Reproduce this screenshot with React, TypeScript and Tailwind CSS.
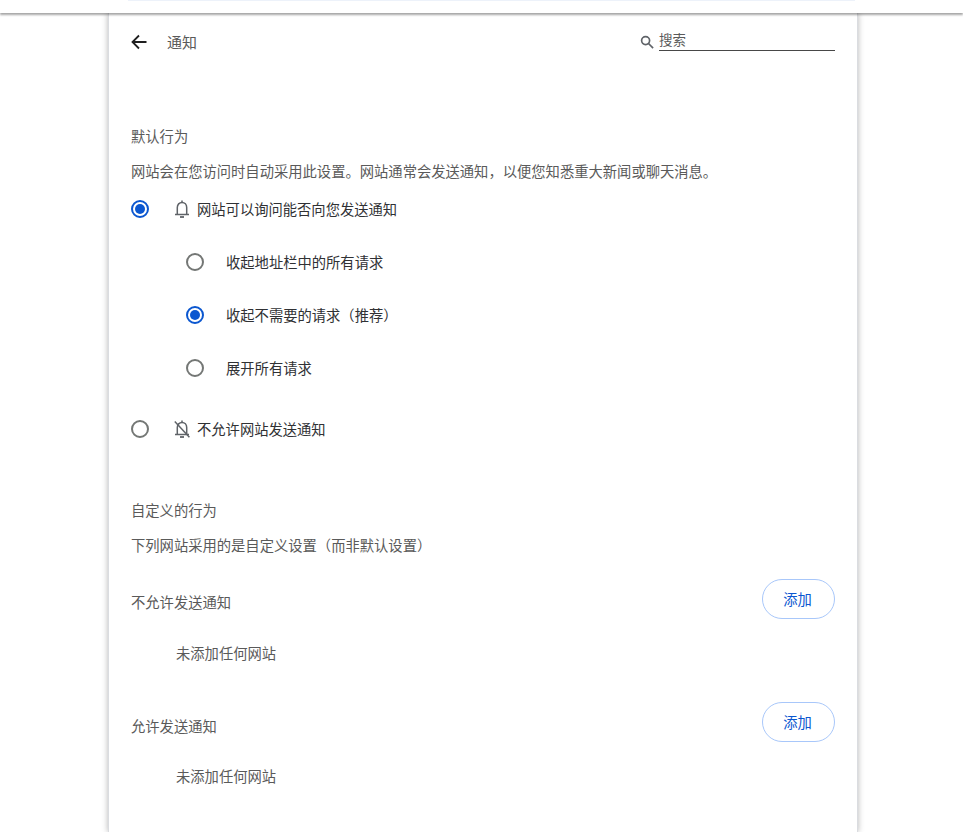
const font = { fontFamily: '"Noto Sans CJK SC", "Noto Sans", sans-serif' };

const Radio = ({ checked }: { checked?: boolean }) => (
  <span
    className={`flex h-[18px] w-[18px] shrink-0 items-center justify-center rounded-full border-2 ${
      checked ? "border-[#0b57d0]" : "border-[#747775]"
    }`}
  >
    {checked && <span className="h-[10px] w-[10px] rounded-full bg-[#0b57d0]" />}
  </span>
);

const BellIcon = ({ off }: { off?: boolean }) => (
  <svg width="18" height="20" viewBox="0 0 18 20" fill="none" stroke="#5f6368" strokeWidth="1.5">
    <path d="M2 15.6h14M4.3 15.6V8.6C4.3 5.6 6.3 3.4 9 3.4s4.7 2.2 4.7 5.2v7" />
    <path d="M9 1.4v2" />
    <path d="M7 18h4" strokeWidth="1.8" />
    {off && <path d="M1.8 2.6l14.6 15.6" />}
  </svg>
);

const SubOption = ({ label, checked }: { label: string; checked?: boolean }) => (
  <div className="flex h-[53px] items-center gap-[22px] pl-[55px]">
    <Radio checked={checked} />
    <span className="text-[#303134]">{label}</span>
  </div>
);

const SiteList = ({ title, titleClass }: { title: string; titleClass: string }) => (
  <section>
    <div className="flex h-10 items-start justify-between">
      <span className={`text-[#5a5a5a] ${titleClass}`}>{title}</span>
      <button className="h-10 w-[73px] rounded-[20px] border border-[#a8c7fa] bg-white pr-[2px] text-[#0b57d0]">
        添加
      </button>
    </div>
    <p className="mt-[24px] h-5 pl-[45px] leading-5 text-[#5a5a5a]">未添加任何网站</p>
  </section>
);

export default function App() {
  return (
    <div className="h-[832px] overflow-hidden bg-white text-[14.3px]" style={font}>
      <header className="relative z-10 h-[13px] bg-white shadow-[0_2px_2px_rgba(0,0,0,0.35)]">
        <div className="ml-[128px] h-px w-[727px] bg-[#edf2fa]" />
      </header>
      <main className="ml-[108px] h-[819px] w-[750px] border-l border-r border-[#dadce0] bg-white px-[22px] shadow-[0_0_6px_rgba(0,0,0,0.3)]">
        <div className="flex h-[56px] items-center justify-between pt-[2px]">
          <div className="flex items-center gap-[20px]">
            <svg width="16" height="16" viewBox="0 0 16 16" fill="none" stroke="#1f1f1f" strokeWidth="1.8">
              <path d="M15.5 8H1.5M8 1.5L1.5 8 8 14.5" />
            </svg>
            <h1 className="text-[15px] text-[#5a5a5a]">通知</h1>
          </div>
          <div className="flex items-center gap-[5px]">
            <svg width="14" height="14" viewBox="0 0 14 14" fill="none" stroke="#5f6368" strokeWidth="1.7">
              <circle cx="5.6" cy="5.6" r="4" />
              <path d="M8.5 8.5l4.6 4.6" />
            </svg>
            <div className="h-[18px] w-[176px] border-b border-[#474747] text-[13.5px] leading-[13px] text-[#5a5a5a]">搜索</div>
          </div>
        </div>

        <section className="mt-[57px]">
          <h2 className="h-5 leading-5 text-[#5a5a5a]">默认行为</h2>
          <p className="mt-[15px] h-5 leading-5 text-[#5a5a5a]">
            网站会在您访问时自动采用此设置。网站通常会发送通知，以便您知悉重大新闻或聊天消息。
          </p>
          <div className="mt-[18px] flex h-5 items-center">
            <Radio checked />
            <span className="ml-[24px] mr-[6px]">
              <BellIcon />
            </span>
            <span className="text-[#303134]">网站可以询问能否向您发送通知</span>
          </div>
          <div className="mt-[16px]">
            <SubOption label="收起地址栏中的所有请求" />
            <SubOption label="收起不需要的请求（推荐）" checked />
            <SubOption label="展开所有请求" />
          </div>
          <div className="mt-[25px] flex h-5 items-center">
            <Radio />
            <span className="ml-[24px] mr-[6px]">
              <BellIcon off />
            </span>
            <span className="text-[#303134]">不允许网站发送通知</span>
          </div>
        </section>

        <section className="mt-[61px]">
          <h2 className="h-5 leading-5 text-[#5a5a5a]">自定义的行为</h2>
          <p className="mt-[15px] h-5 leading-5 text-[#5a5a5a]">下列网站采用的是自定义设置（而非默认设置）</p>
        </section>

        <div className="mt-[24px]">
          <SiteList title="不允许发送通知" titleClass="mt-[12px]" />
        </div>
        <div className="mt-[39px]">
          <SiteList title="允许发送通知" titleClass="mt-[13px]" />
        </div>
      </main>
    </div>
  );
}
